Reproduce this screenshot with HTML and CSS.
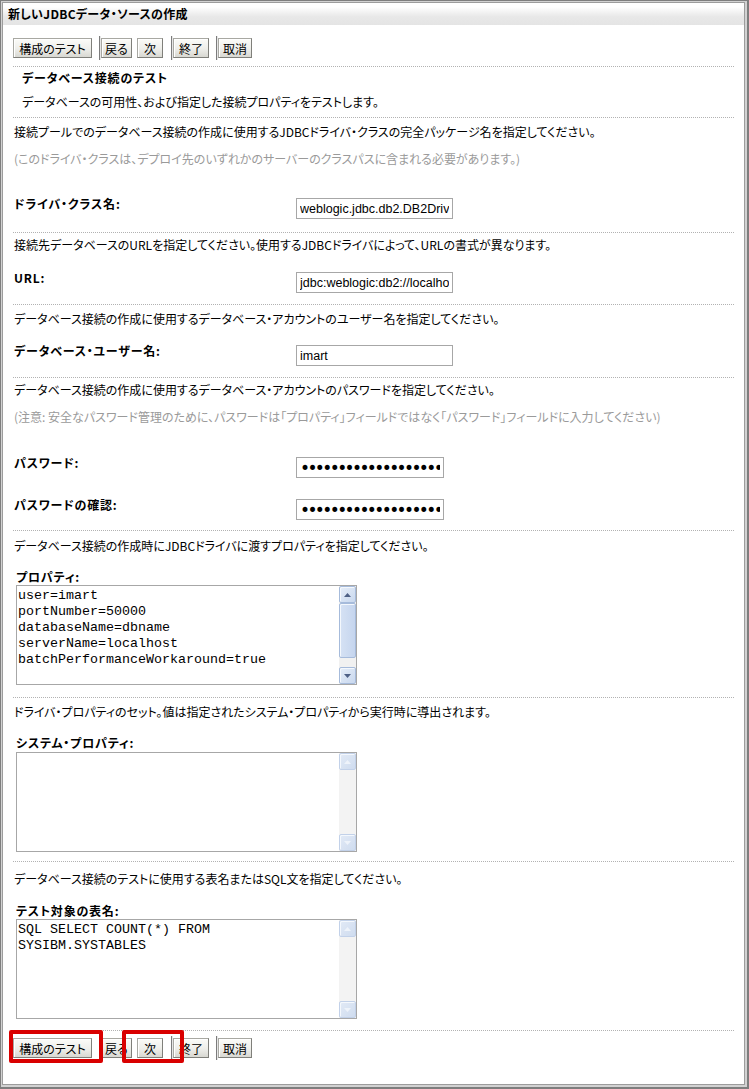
FILE: index.html
```html
<!DOCTYPE html>
<html lang="ja">
<head>
<meta charset="utf-8">
<title>新しいJDBCデータ・ソースの作成</title>
<link rel="stylesheet" href="styles.css">
</head>
<body>
<div class="frame">
  <div class="window">
    <div class="titlebar">新しいJDBCデータ・ソースの作成</div>
    <div class="content">
      <div class="toolbar toolbar-top">
        <button class="btn w-test">構成のテスト</button>
        <span class="tsep"></span>
        <button class="btn w-back">戻る</button>
        <button class="btn w-next">次</button>
        <span class="tsep"></span>
        <button class="btn w-finish">終了</button>
        <span class="tsep"></span>
        <button class="btn w-cancel">取消</button>
      </div>

      <div class="sec sec-a">
        <h2 class="sec-title">データベース接続のテスト</h2>
        <p class="desc">データベースの可用性、および指定した接続プロパティをテストします。</p>
      </div>

      <div class="sec sec-b">
        <p class="desc">接続プールでのデータベース接続の作成に使用するJDBCドライバ・クラスの完全パッケージ名を指定してください。</p>
        <p class="note">(このドライバ・クラスは、デプロイ先のいずれかのサーバーのクラスパスに含まれる必要があります。)</p>
        <div class="row r-driver">
          <label class="lbl">ドライバ・クラス名:</label>
          <input class="field" type="text" value="weblogic.jdbc.db2.DB2Driver">
        </div>
      </div>

      <div class="sec sec-c">
        <p class="desc">接続先データベースのURLを指定してください。使用するJDBCドライバによって、URLの書式が異なります。</p>
        <div class="row r-url">
          <label class="lbl">URL:</label>
          <input class="field" type="text" value="jdbc:weblogic:db2://localhost:50000">
        </div>
      </div>

      <div class="sec sec-d">
        <p class="desc">データベース接続の作成に使用するデータベース・アカウントのユーザー名を指定してください。</p>
        <div class="row r-user">
          <label class="lbl">データベース・ユーザー名:</label>
          <input class="field" type="text" value="imart">
        </div>
      </div>

      <div class="sec sec-e">
        <p class="desc">データベース接続の作成に使用するデータベース・アカウントのパスワードを指定してください。</p>
        <p class="note">(注意: 安全なパスワード管理のために、パスワードは「プロパティ」フィールドではなく「パスワード」フィールドに入力してください)</p>
        <div class="row r-pw">
          <label class="lbl">パスワード:</label>
          <input class="field pw" type="password" value="xxxxxxxxxxxxxxxxxxx">
        </div>
        <div class="row r-pw2">
          <label class="lbl">パスワードの確認:</label>
          <input class="field pw" type="password" value="xxxxxxxxxxxxxxxxxxx">
        </div>
      </div>

      <div class="sec sec-f">
        <p class="desc">データベース接続の作成時にJDBCドライバに渡すプロパティを指定してください。</p>
        <div class="ta-block">
          <label class="ta-label">プロパティ:</label>
          <div class="ta">
            <textarea class="ta-text" readonly>user=imart
portNumber=50000
databaseName=dbname
serverName=localhost
batchPerformanceWorkaround=true</textarea>
            <div class="sb">
              <div class="sb-btn"><svg width="7" height="4" viewBox="0 0 7 4"><path d="M0 4L3.5 0L7 4Z"/></svg></div>
              <div class="sb-track"><div class="sb-thumb"></div></div>
              <div class="sb-btn"><svg width="7" height="4" viewBox="0 0 7 4"><path d="M0 0L3.5 4L7 0Z"/></svg></div>
            </div>
          </div>
        </div>
      </div>

      <div class="sec sec-g">
        <p class="desc">ドライバ・プロパティのセット。値は指定されたシステム・プロパティから実行時に導出されます。</p>
        <div class="ta-block">
          <label class="ta-label">システム・プロパティ:</label>
          <div class="ta">
            <textarea class="ta-text" readonly></textarea>
            <div class="sb off">
              <div class="sb-btn"><svg width="7" height="4" viewBox="0 0 7 4"><path d="M0 4L3.5 0L7 4Z"/></svg></div>
              <div class="sb-track"></div>
              <div class="sb-btn"><svg width="7" height="4" viewBox="0 0 7 4"><path d="M0 0L3.5 4L7 0Z"/></svg></div>
            </div>
          </div>
        </div>
      </div>

      <div class="sec sec-h">
        <p class="desc">データベース接続のテストに使用する表名またはSQL文を指定してください。</p>
        <div class="ta-block">
          <label class="ta-label">テスト対象の表名:</label>
          <div class="ta">
            <textarea class="ta-text" readonly>SQL SELECT COUNT(*) FROM
SYSIBM.SYSTABLES</textarea>
            <div class="sb off">
              <div class="sb-btn"><svg width="7" height="4" viewBox="0 0 7 4"><path d="M0 4L3.5 0L7 4Z"/></svg></div>
              <div class="sb-track"></div>
              <div class="sb-btn"><svg width="7" height="4" viewBox="0 0 7 4"><path d="M0 0L3.5 4L7 0Z"/></svg></div>
            </div>
          </div>
        </div>
      </div>

      <div class="toolbar toolbar-bottom">
        <button class="btn w-test">構成のテスト</button>
        <span class="tsep"></span>
        <button class="btn w-back">戻る</button>
        <button class="btn w-next">次</button>
        <span class="tsep"></span>
        <button class="btn w-finish">終了</button>
        <span class="tsep"></span>
        <button class="btn w-cancel">取消</button>
        <span class="hl hl-1"></span>
        <span class="hl hl-2"></span>
      </div>
    </div>
  </div>
</div>
</body>
</html>
```

FILE: styles.css
```css
html, body {
  margin: 0;
  padding: 0;
  background: #ffffff;
}

body {
  font-family: "Noto Sans CJK JP", "Liberation Sans", sans-serif;
  font-size: 12px;
  line-height: 16px;
  color: #000;
  font-feature-settings: "palt";
}

.frame {
  width: 749px;
  height: 1089px;
  box-sizing: border-box;
  border: 1px solid #7e7e7e;
  border-right-width: 2px;
  border-bottom-width: 2px;
  padding: 1px 2px 2px 1px;
  background: #d2d2d2;
}

.window {
  height: 100%;
  box-sizing: border-box;
  border: 1px solid #9c9c9c;
  background: #fff;
}

.titlebar {
  height: 22px;
  line-height: 21px;
  padding-left: 5px;
  font-weight: bold;
  letter-spacing: 0.3px;
  background: linear-gradient(#ffffff 0%, #ffffff 18%, #e8e8e8 62%, #e4e4e4 100%);
}

.content {
  padding: 0 10px;
}

/* toolbars */
.toolbar {
  display: flex;
  align-items: center;
  height: 24px;
}

.toolbar-top {
  margin-top: 11px;
  margin-bottom: 6px;
}

.toolbar-bottom {
  position: relative;
  border-top: 1px dotted #b2b2b2;
  padding-top: 5px;
}

.btn {
  height: 20px;
  box-sizing: border-box;
  margin: 0;
  padding: 0;
  font-family: "Noto Sans CJK JP", sans-serif;
  font-size: 12px;
  line-height: 17px;
  font-feature-settings: "palt";
  color: #000;
  border: 1px solid;
  border-color: #a8a8a2 #7f7f7a #7f7f7a #a8a8a2;
  border-radius: 0;
  background: linear-gradient(#fbfbf8 0%, #eeeeea 55%, #d8d8d2 100%);
  box-shadow: inset 1px 1px 0 #ffffff;
  text-align: center;
}

.w-test { width: 79px; margin-right: 7px; }
.w-back { width: 31px; margin-right: 5px; }
.w-next { width: 26px; margin-right: 8px; }
.w-finish { width: 36px; margin-right: 7px; }
.w-cancel { width: 34px; }

.tsep {
  width: 1px;
  height: 24px;
  background: #7c7c7c;
  border-right: 1px solid #e6e6e6;
  flex: none;
}

.hl {
  position: absolute;
  top: -1px;
  height: 33px;
  box-sizing: border-box;
  border: 4px solid #d90000;
  border-radius: 2px;
}

.hl-1 { left: -4px; width: 94px; }
.hl-2 { left: 109px; width: 62px; }

/* sections */
.sec {
  border-top: 1px dotted #b2b2b2;
  padding-left: 1px;
}

.sec-a { padding: 3px 0 7px 9px; }
.sec-b { padding-top: 6px; padding-bottom: 13px; }
.sec-c { padding-top: 4px; padding-bottom: 11px; }
.sec-d { padding-top: 6px; padding-bottom: 11px; }
.sec-e { padding-top: 4px; padding-bottom: 10px; }
.sec-f { padding-top: 7px; padding-bottom: 12px; }
.sec-g { padding-top: 6px; padding-bottom: 9px; }
.sec-h { padding-top: 9px; padding-bottom: 11px; }

.sec-title {
  margin: 0 0 8px;
  font-size: 12px;
  line-height: 16px;
  font-weight: bold;
  letter-spacing: 0.8px;
}

.desc {
  margin: 0;
  line-height: 16px;
  white-space: nowrap;
}

.note {
  margin: 11px 0 0;
  line-height: 16px;
  color: #9a9a9a;
  white-space: nowrap;
}

/* label + input rows */
.row {
  display: flex;
  align-items: flex-start;
}

.r-driver { margin-top: 29px; }
.r-url { margin-top: 17px; }
.r-user { margin-top: 16px; }
.r-pw { margin-top: 30px; }
.r-pw2 { margin-top: 19px; }

.lbl {
  width: 282px;
  flex: none;
  font-weight: bold;
  line-height: 16px;
  letter-spacing: 0.8px;
}

.field {
  margin: 2px 0 0;
  width: 157px;
  height: 21px;
  box-sizing: border-box;
  border: 1px solid #a7a7a7;
  padding: 0 3px;
  font-family: "Liberation Sans", sans-serif;
  font-size: 12.5px;
  color: #000;
  background: #fff;
  outline: none;
}

.pw {
  width: 148px;
  font-family: "DejaVu Sans", sans-serif;
  font-size: 17px;
  letter-spacing: -2.6px;
  padding-left: 3px;
}

/* textareas */
.ta-block {
  margin-left: 2px;
}

.sec-f .ta-block { margin-top: 15px; }
.sec-g .ta-block { margin-top: 15px; }
.sec-h .ta-block { margin-top: 16px; }
.sec-g .ta { margin-top: 1px; }

.ta-label {
  display: block;
  font-weight: bold;
  line-height: 16px;
  letter-spacing: 0.8px;
}

.ta {
  display: flex;
  width: 341px;
  height: 100px;
  box-sizing: border-box;
  border: 1px solid #a7a7a7;
  background: #fff;
}

.ta-text {
  flex: 1;
  min-width: 0;
  margin: 0;
  border: 0;
  padding: 2px 1px;
  resize: none;
  overflow: hidden;
  font-family: "Liberation Mono", monospace;
  font-size: 13.33px;
  line-height: 16px;
  color: #000;
  background: #fff;
  outline: none;
}

.sb {
  width: 17px;
  flex: none;
  display: flex;
  flex-direction: column;
  background: #f1f1f1;
}

.sb-btn {
  flex: none;
  height: 17px;
  box-sizing: border-box;
  border: 1px solid #a6bbdb;
  border-radius: 2px;
  background: linear-gradient(135deg, #e6eef9 0%, #c9d8ee 100%);
  box-shadow: inset 1px 1px 0 #f4f8fd;
  display: flex;
  align-items: center;
  justify-content: center;
}

.sb-btn svg {
  display: block;
  fill: #4f6186;
}

.sb-track {
  flex: 1;
  display: flex;
  flex-direction: column;
}

.sb-thumb {
  height: 55px;
  box-sizing: border-box;
  border: 1px solid #a6bbdb;
  border-radius: 2px;
  background: linear-gradient(90deg, #d6e2f4 0%, #c5d5ee 100%);
  box-shadow: inset 1px 1px 0 #f4f8fd;
}

.sb.off {
  background: #f3f3f3;
}

.sb.off .sb-btn {
  border-color: #c2d1e9;
  background: linear-gradient(135deg, #e2eaf6 0%, #cfdcef 100%);
}

.sb.off .sb-btn svg {
  fill: #eef3fa;
}
```
